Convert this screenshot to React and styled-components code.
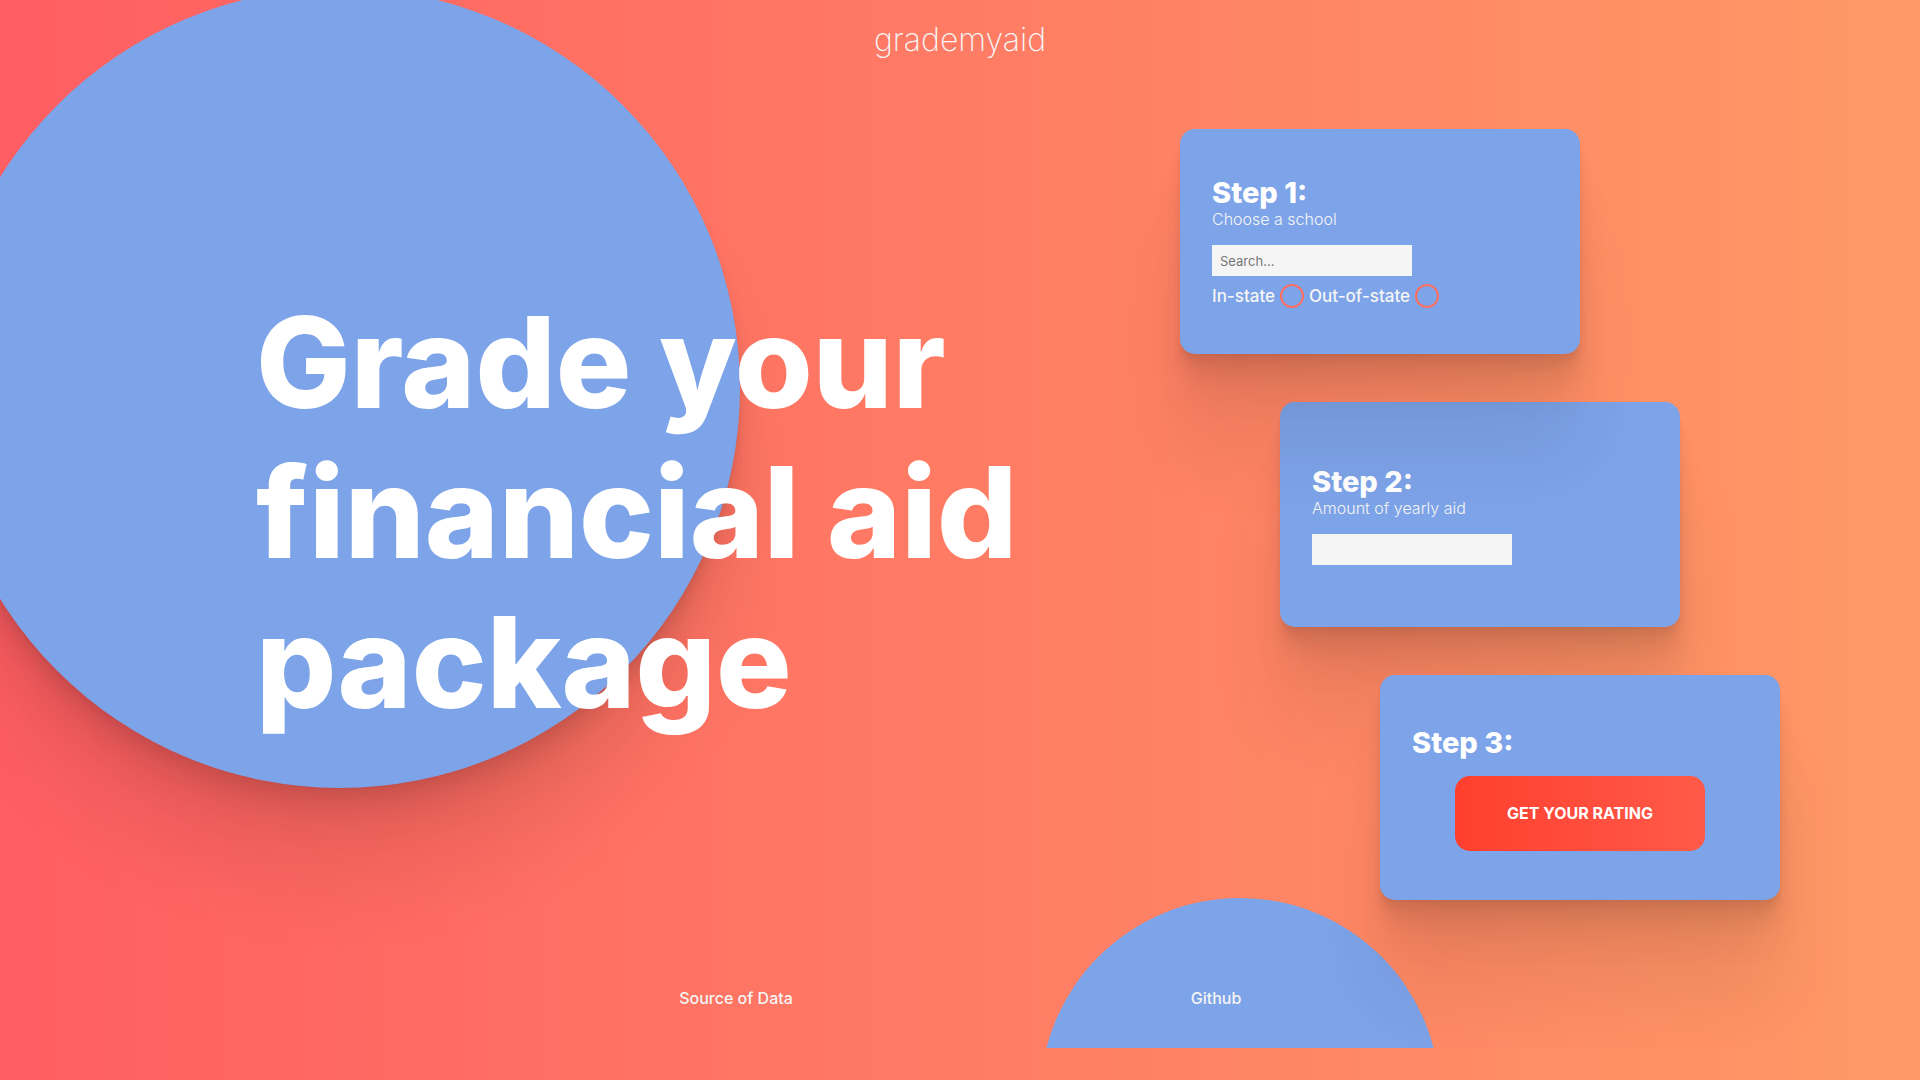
import React from "react";
import styled, { createGlobalStyle } from "styled-components";

const blue = "#7da3e8";
const offWhite = "#f5f5f5";
const softShadow = `
  0 3px 2px rgba(0, 0, 0, 0.02),
  0 7px 5px rgba(0, 0, 0, 0.028),
  0 13px 10px rgba(0, 0, 0, 0.035),
  0 22px 18px rgba(0, 0, 0, 0.042),
  0 42px 33px rgba(0, 0, 0, 0.05),
  0 100px 80px rgba(0, 0, 0, 0.07)`;

const GlobalStyle = createGlobalStyle`
  *, *::before, *::after { box-sizing: border-box; }
  html { background: linear-gradient(to right, #ff5e62, #ff9966); }
  body {
    margin: 0;
    padding-bottom: 32px;
    font-family: Inter, "Liberation Sans", sans-serif;
    font-size: 16px;
    color: ${offWhite};
  }
  h1, h2, p { margin: 0; }
`;

/* Shapes and shadows are cut at the page's lower edge, above the margin. */
const Page = styled.div`
  position: relative;
  isolation: isolate;
  display: flex;
  flex-direction: column;
  min-height: calc(100vh - 32px);
  overflow: hidden;
`;

const BigCircle = styled.div`
  position: absolute;
  z-index: -1;
  top: -12px;
  left: -60px;
  width: 800px;
  height: 800px;
  border-radius: 50%;
  background: ${blue};
  box-shadow: ${softShadow};
`;

const SmallCircle = styled.div`
  position: absolute;
  z-index: -1;
  bottom: -250px;
  left: calc(50% + 80px);
  width: 400px;
  height: 400px;
  border-radius: 50%;
  background: ${blue};
`;

const Header = styled.header`
  display: flex;
  justify-content: center;
  padding: 21px 0 23px;
`;

const Logo = styled.a`
  font-size: 32px;
  line-height: 37px;
  font-weight: 200;
  color: ${offWhite};
  text-decoration: none;
`;

const Main = styled.main`
  flex: 1;
  display: grid;
  grid-template-columns: 1180fr 740fr;
  align-items: center;
`;

const Title = styled.h1`
  max-width: 1100px;
  padding: 0 0 6px 256px;
  font-size: 126px;
  line-height: 150px;
  font-weight: 800;
  color: #fff;
`;

const Steps = styled.form`
  display: flex;
  flex-direction: column;
  gap: 48px;
`;

const Card = styled.section`
  position: relative;
  z-index: ${(p) => p.$layer};
  display: flex;
  flex-direction: column;
  justify-content: center;
  width: 400px;
  min-height: 225px;
  margin-left: ${(p) => p.$indent}px;
  padding: 32px;
  border-radius: 15px;
  background: ${blue};
  box-shadow: ${softShadow};
`;

const StepTitle = styled.h2`
  font-size: 29px;
  line-height: 35px;
  font-weight: 800;
  color: #fff;
`;

const Hint = styled.label`
  font-size: 16px;
  line-height: 19px;
  font-weight: 300;
`;

const Field = styled.input`
  width: 200px;
  height: 31px;
  margin-top: 16px;
  padding: 0 8px;
  border: 0;
  border-radius: 0;
  background: #f5f5f5;
  font: inherit;
  font-size: 13px;
  color: #333;

  &::placeholder { color: #757575; }
`;

const Choices = styled.div`
  display: flex;
  align-items: center;
  gap: 5px;
  margin-top: 8px;
  font-size: 17px;
  line-height: 19px;
  font-weight: 500;
`;

const Radio = styled.input`
  appearance: none;
  width: 24px;
  height: 24px;
  margin: 0;
  border: 2px solid #ff6f61;
  border-radius: 50%;

  &:checked { background: #ff6f61; }
`;

const RateButton = styled.button`
  align-self: center;
  width: 250px;
  height: 75px;
  margin-top: 16px;
  border: 0;
  border-radius: 15px;
  background: linear-gradient(to right, #ff3f2e, #ff5a49);
  font: inherit;
  font-size: 16px;
  font-weight: 700;
  text-transform: uppercase;
  color: #fff;
  cursor: pointer;
`;

const Footer = styled.footer`
  display: grid;
  grid-template-columns: 1fr 1fr;
  align-items: center;
  justify-items: center;
  width: 50%;
  height: 100px;
  margin: 0 auto;
  padding-left: 32px;
  box-sizing: content-box;
`;

const FooterLink = styled.a`
  font-weight: 500;
  color: ${offWhite};
  text-decoration: none;
`;

export default function App() {
  return (
    <>
      <GlobalStyle />
      <Page>
        <BigCircle />
        <SmallCircle />
        <Header>
          <Logo href="#">grademyaid</Logo>
        </Header>
        <Main>
          <Title>Grade your financial aid package</Title>
          <Steps onSubmit={(e) => e.preventDefault()}>
            <Card $indent={0} $layer={2}>
              <StepTitle>Step 1:</StepTitle>
              <Hint htmlFor="school">Choose a school</Hint>
              <Field id="school" type="text" placeholder="Search..." />
              <Choices>
                <label htmlFor="in-state">In-state</label>
                <Radio id="in-state" type="radio" name="residency" />
                <label htmlFor="out-of-state">Out-of-state</label>
                <Radio id="out-of-state" type="radio" name="residency" />
              </Choices>
            </Card>
            <Card $indent={100} $layer={1}>
              <StepTitle>Step 2:</StepTitle>
              <Hint htmlFor="aid">Amount of yearly aid</Hint>
              <Field id="aid" type="text" />
            </Card>
            <Card $indent={200} $layer={2}>
              <StepTitle>Step 3:</StepTitle>
              <RateButton type="submit">Get your rating</RateButton>
            </Card>
          </Steps>
        </Main>
        <Footer>
          <FooterLink href="#">Source of Data</FooterLink>
          <FooterLink href="#">Github</FooterLink>
        </Footer>
      </Page>
    </>
  );
}
